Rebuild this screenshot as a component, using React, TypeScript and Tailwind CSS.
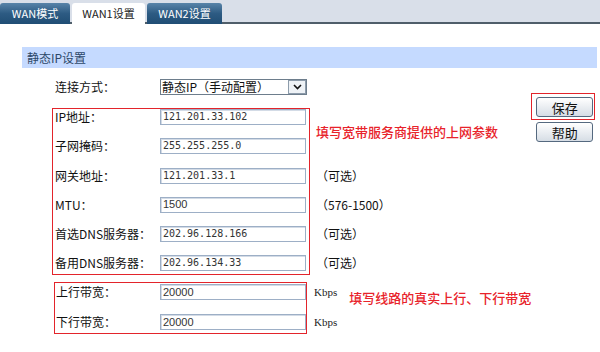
import React from 'react';

type Row = { label: string; value: string; mono?: boolean };

const ispRows: Row[] = [
  { label: 'IP地址：', value: '121.201.33.102', mono: true },
  { label: '子网掩码：', value: '255.255.255.0', mono: true },
  { label: '网关地址：', value: '121.201.33.1', mono: true },
  { label: 'MTU：', value: '1500' },
  { label: '首选DNS服务器：', value: '202.96.128.166', mono: true },
  { label: '备用DNS服务器：', value: '202.96.134.33', mono: true },
];

const bandRows: Row[] = [
  { label: '上行带宽：', value: '20000' },
  { label: '下行带宽：', value: '20000' },
];

const Field: React.FC<{ value: string; mono?: boolean }> = ({ value, mono }) => (
  <div className="flex h-[16px] w-[146px] shrink-0 items-center border border-[#9dafc6] bg-white pl-[2px] shadow-[inset_1px_1px_0_#d3dbe6]">
    <span
      className={
        mono
          ? "font-['DejaVu_Sans_Mono',monospace] text-[10px] leading-none text-[#333]"
          : "font-['Liberation_Sans',sans-serif] text-[11px] leading-none text-[#333]"
      }
    >
      {value}
    </span>
  </div>
);

const Tab: React.FC<{ active?: boolean; width: string; children: React.ReactNode }> = ({ active, width, children }) => (
  <div
    className={
      active
        ? `relative -mb-[2px] flex h-[21px] items-center justify-center rounded-t-[3px] bg-white text-[11px] text-[#222] ${width}`
        : `relative -mb-[2px] flex h-[21px] items-center justify-center rounded-t-[3px] bg-linear-to-b from-[#5884a9] via-[#2d5b83] to-[#204d74] text-[11px] text-white ${width}`
    }
  >
    {children}
  </div>
);

const Btn: React.FC<{ children: React.ReactNode }> = ({ children }) => (
  <div className="flex h-[20px] w-[57px] items-center justify-center rounded-[3px] border border-[#55697f] bg-linear-to-b from-white to-[#d6dde5] text-[13px] leading-none text-[#111]">
    {children}
  </div>
);

export default function App() {
  return (
    <div className="h-[352px] w-[600px] overflow-hidden bg-white font-['Noto_Sans_CJK_SC',sans-serif]">
      {/* tabs */}
      <div className="flex h-[24px] items-end gap-[2px] border-b-2 border-[#4f5e6a] bg-[#d9dfe9]">
        <Tab width="w-[70px]">WAN模式</Tab>
        <Tab active width="w-[73px]">WAN1设置</Tab>
        <Tab width="w-[75px]">WAN2设置</Tab>
      </div>

      {/* section title */}
      <div className="ml-[22px] mr-[3px] mt-[23px] flex h-[21px] items-center bg-[#c5daff] pl-[5px] text-[12px] text-[#2d4869]">
        静态IP设置
      </div>

      <div className="mt-[11px] flex justify-between pl-[52px] pr-[13px]">
        <div className="flex flex-col">
          {/* connection type */}
          <div className="flex h-[16px] items-center pl-[3px]">
            <div className="w-[105px] text-[12px] leading-[16px] text-[#111]">连接方式：</div>
            <div className="flex h-[16px] w-[147px] items-center border border-[#6d7d8c] bg-white">
              <span className="flex-1 pl-[1px] text-[12px] leading-none text-[#111]">静态IP（手动配置）</span>
              <div className="flex h-[14px] w-[18px] items-center justify-center border border-[#8d9cab] bg-[#eef2f6]">
                <svg width="9" height="6" viewBox="0 0 9 6">
                  <polyline points="1,1 4.5,4.5 8,1" fill="none" stroke="#111" strokeWidth="1.6" />
                </svg>
              </div>
            </div>
          </div>

          {/* ISP parameters */}
          <div className="mt-[13px] flex items-start">
            <div className="flex flex-col gap-[13.3px] border border-[#e3242b] pb-[3px] pl-[2px] pr-[3px]">
              {ispRows.map((r) => (
                <div key={r.label} className="flex items-center">
                  <div className="w-[105px] text-[12px] leading-[16px] text-[#111]">{r.label}</div>
                  <Field value={r.value} mono={r.mono} />
                </div>
              ))}
            </div>
            <div className="ml-[6px] flex flex-col gap-[13.3px] pt-[1px] text-[12px] leading-[16px] text-[#111]">
              <div className="flex h-[45.3px] items-center text-[13px] font-medium text-[#e8232b]">
                填写宽带服务商提供的上网参数
              </div>
              <div className="h-[16px]">（可选）</div>
              <div className="h-[16px]">（576-1500）</div>
              <div className="h-[16px]">（可选）</div>
              <div className="h-[16px]">（可选）</div>
            </div>
          </div>

          {/* bandwidth */}
          <div className="mt-[7px] flex items-start">
            <div className="ml-[2px] flex flex-col gap-[14px] border border-[#e3242b] pb-[3px] pl-[1px] pt-[1px]">
              {bandRows.map((r) => (
                <div key={r.label} className="flex items-center">
                  <div className="w-[104px] text-[12px] leading-[16px] text-[#111]">{r.label}</div>
                  <Field value={r.value} />
                </div>
              ))}
            </div>
            <div className="ml-[7px] flex flex-col gap-[14px] pt-[2px] font-['Liberation_Serif',serif] text-[11px] text-[#222]">
              <div className="flex h-[16px] items-start">
                <span className="leading-[16px]">Kbps</span>
                <span className="ml-[12px] mt-[6px] whitespace-nowrap font-['Noto_Sans_CJK_SC',sans-serif] text-[13px] font-medium leading-[16px] text-[#e8232b]">
                  填写线路的真实上行、下行带宽
                </span>
              </div>
              <div className="flex h-[16px] items-center">Kbps</div>
            </div>
          </div>
        </div>

        {/* buttons */}
        <div className="mt-[14px] flex flex-col">
          <div className="border border-[#e3242b] pb-[2px] pl-[4px] pr-[1px] pt-[3px]">
            <Btn>保存</Btn>
          </div>
          <div className="ml-[5px] mt-[2px]">
            <Btn>帮助</Btn>
          </div>
        </div>
      </div>
    </div>
  );
}
